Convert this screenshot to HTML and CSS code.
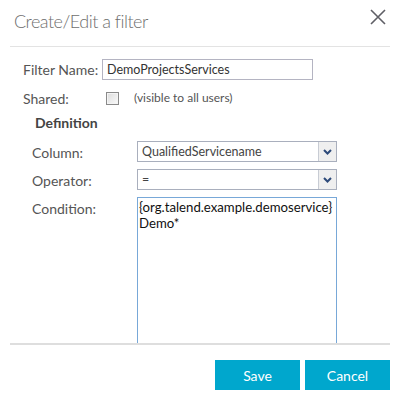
FILE: index.html
```
<!DOCTYPE html>
<html lang="en">
<head>
    <meta charset="UTF-8">
    <title>Create/Edit a filter</title>
    <link rel="stylesheet" href="styles.css">
</head>
<body>
    <div class="dialog">
        <div class="dialog-header">
            <h2>Create/Edit a filter</h2>
            <svg class="close" width="16" height="16" viewBox="0 0 16 16">
                <path d="M1 1 L15 15 M15 1 L1 15" stroke="#5f5f66" stroke-width="1.6" fill="none"/>
            </svg>
        </div>
        <div class="dialog-body">
            <div class="form-top">
                <label for="name">Filter Name:</label>
                <input type="text" id="name" value="DemoProjectsServices">
                <label>Shared:</label>
                <div class="shared">
                    <span class="checkbox"></span>
                    <span class="hint">(visible to all users)</span>
                </div>
            </div>
            <h4>Definition</h4>
            <div class="definition">
                <label>Column:</label>
                <div class="select">
                    <span class="value">QualifiedServicename</span>
                    <span class="arrow">
                        <svg width="9" height="6" viewBox="0 0 9 6"><path d="M1 1 L4.5 4.5 L8 1" stroke="#2d4a7a" stroke-width="2" fill="none"/></svg>
                    </span>
                </div>
                <label>Operator:</label>
                <div class="select">
                    <span class="value">=</span>
                    <span class="arrow">
                        <svg width="9" height="6" viewBox="0 0 9 6"><path d="M1 1 L4.5 4.5 L8 1" stroke="#2d4a7a" stroke-width="2" fill="none"/></svg>
                    </span>
                </div>
                <label>Condition:</label>
                <textarea wrap="off">{org.talend.example.demoservice}
Demo*</textarea>
            </div>
        </div>
        <div class="dialog-footer">
            <button class="btn">Save</button>
            <button class="btn">Cancel</button>
        </div>
    </div>
</body>
</html>
```

FILE: styles.css
```
body {
    font-family: "Source Sans Pro", Lato, "Open Sans", sans-serif;
    margin: 0;
    padding: 0;
    background-color: #fff;
    color: #555;
}
.dialog {
    width: 400px;
    height: 405px;
    padding: 0 10px;
    box-sizing: border-box;
}
.dialog-header {
    height: 46px;
    border-bottom: 1px solid #e3e3e3;
    display: flex;
    justify-content: space-between;
}
.dialog-header h2 {
    margin: 0;
    padding: 9px 0 0 4px;
    font-size: 18px;
    font-weight: 300;
    letter-spacing: -0.5px;
    line-height: 24px;
    color: #6e6e6e;
}
.close {
    margin: 9px 4px 0 0;
}
.dialog-body {
    height: 296px;
    overflow: hidden;
    border-bottom: 2px solid #dedede;
    font-size: 14px;
}
.form-top {
    display: grid;
    grid-template-columns: 79px 211px;
    row-gap: 8px;
    align-items: center;
    padding: 12px 0 0 13px;
}
.form-top input[type="text"] {
    height: 21px;
    box-sizing: border-box;
    border: 1px solid #b4b4c2;
    padding: 0 4px;
    font-family: inherit;
    font-size: 12.5px;
    color: #333;
}
.shared {
    display: flex;
    align-items: center;
    height: 20px;
}
.checkbox {
    width: 11px;
    height: 11px;
    margin-left: 4px;
    border: 1px solid #8a8a8a;
    background: linear-gradient(135deg, #dcdcdc, #fafafa);
    box-shadow: inset 0 0 0 1px #f4f4f4;
}
.hint {
    margin-left: 15px;
    font-size: 12px;
    position: relative;
    top: -1px;
}
h4 {
    margin: 6px 0 0 25px;
    font-size: 14px;
    line-height: 18px;
    color: #444;
}
.definition {
    display: grid;
    grid-template-columns: 105px 200px;
    row-gap: 7px;
    align-items: start;
    padding-left: 22px;
    margin-top: 9px;
}
.definition label {
    line-height: 18px;
    padding-top: 3px;
}
.select {
    height: 21px;
    box-sizing: border-box;
    border: 1px solid #a9afbd;
    display: flex;
    align-items: stretch;
}
.select .value {
    flex: 1;
    padding: 0 4px;
    line-height: 19px;
    font-size: 12.5px;
    color: #444;
}
.select .arrow {
    width: 17px;
    border-left: 1px solid #c8ccd4;
    background-color: #efefef;
    display: flex;
    align-items: center;
    justify-content: center;
}
textarea {
    width: 200px;
    height: 160px;
    box-sizing: border-box;
    border: 1px solid #78a8d8;
    padding: 1px 0 0 1px;
    font-family: inherit;
    font-size: 13.2px;
    line-height: 16px;
    color: #111;
    resize: none;
    outline: none;
    overflow: hidden;
}
.dialog-footer {
    display: flex;
    justify-content: flex-end;
    gap: 5px;
    padding-top: 15px;
}
.btn {
    width: 85px;
    height: 30px;
    border: none;
    background-color: #00a7cd;
    color: #fff;
    font-family: inherit;
    font-size: 14px;
    cursor: pointer;
}
```
